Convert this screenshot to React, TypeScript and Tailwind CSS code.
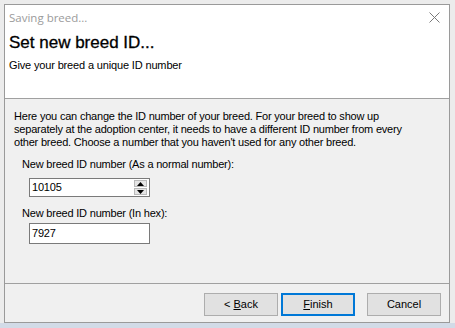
const sans = "font-['Liberation_Sans',Arial,sans-serif]";

function SpinArrows() {
  return (
    <div className="absolute right-[2px] top-[1px] flex flex-col gap-[1px]">
      <div className="flex h-[7px] w-[13px] items-center justify-center border border-[#b9b9b9] bg-[#e5e5e5]">
        <svg width="7" height="4" viewBox="0 0 7 4">
          <polygon points="3.5,0 7,4 0,4" fill="#000" />
        </svg>
      </div>
      <div className="flex h-[7px] w-[13px] items-center justify-center border border-[#b9b9b9] bg-[#e5e5e5]">
        <svg width="7" height="4" viewBox="0 0 7 4">
          <polygon points="0,0 7,0 3.5,4" fill="#000" />
        </svg>
      </div>
    </div>
  );
}

function WizButton({
  children,
  primary,
}: {
  children: React.ReactNode;
  primary?: boolean;
}) {
  return (
    <button
      className={
        primary
          ? "flex h-[23px] w-[74px] items-center justify-center border-2 border-[#0078d7] bg-[#e1e1e1] text-[11px] text-black"
          : "flex h-[23px] w-[74px] items-center justify-center border border-[#adadad] bg-[#e1e1e1] text-[11px] text-black"
      }
    >
      {children}
    </button>
  );
}

export default function App() {
  return (
    <div className={`flex h-[328px] w-[455px] flex-col bg-[#ececec] ${sans}`}>
      <div className="pl-[4px] pt-[4px]">
        <div className="flex h-[319px] w-[446px] flex-col border border-[#9a9a9a] bg-[#f0f0f0]">
          {/* title bar + header */}
          <div className="h-[93px] bg-white">
            <div className="flex h-[25px] items-center justify-between pl-[4px] pr-[9px]">
              <span className="font-['Open_Sans',Arial,sans-serif] text-[11.5px] text-[#9b9b9b]">
                Saving breed...
              </span>
              <svg width="11" height="11" viewBox="0 0 11 11">
                <path d="M0.5 0.5 L10.5 10.5 M10.5 0.5 L0.5 10.5" stroke="#7a7a7a" strokeWidth="1" />
              </svg>
            </div>
            <div className="pl-[4px] pt-[3px]">
              <div className="text-[17px] leading-[20px] text-black [-webkit-text-stroke:0.3px_black]">
                Set new breed ID...
              </div>
              <div className="mt-[5px] text-[11px] leading-[14px] tracking-[-0.15px] text-black">
                Give your breed a unique ID number
              </div>
            </div>
          </div>
          <div className="h-px bg-[#a0a0a0]" />

          {/* body */}
          <div className="flex-1 pl-[9px] pr-[32px] pt-[11px] text-[11px] leading-[13px] tracking-[-0.2px] text-black">
            <p>
              Here you can change the ID number of your breed. For your breed to show up separately at
              the adoption center, it needs to have a different ID number from every other breed. Choose
              a number that you haven't used for any other breed.
            </p>
            <div className="pl-[8px] pt-[9px]">
              <div>New breed ID number (As a normal number):</div>
              <div className="relative ml-[7px] mt-[7px] flex h-[19px] w-[121px] items-center border border-[#7a7a7a] bg-white pl-[2px]">
                10105
                <SpinArrows />
              </div>
              <div className="mt-[10px]">New breed ID number (In hex):</div>
              <div className="ml-[7px] mt-[3px] flex h-[21px] w-[121px] items-center border border-[#7a7a7a] bg-white pl-[2px]">
                7927
              </div>
            </div>
          </div>

          <div className="h-px bg-[#a0a0a0]" />
          {/* footer */}
          <div className="flex h-[38px] items-start justify-end pr-[8px] pt-[9px]">
            <div className="flex gap-[3px]">
              <WizButton>
                &lt; <span className="ml-[3px] underline">B</span>ack
              </WizButton>
              <WizButton primary>
                <span className="underline">F</span>inish
              </WizButton>
            </div>
            <div className="ml-[12px]">
              <WizButton>Cancel</WizButton>
            </div>
          </div>
        </div>
      </div>
      <div className="mt-auto h-[5px] w-full bg-[#d2dbe7]" />
    </div>
  );
}
